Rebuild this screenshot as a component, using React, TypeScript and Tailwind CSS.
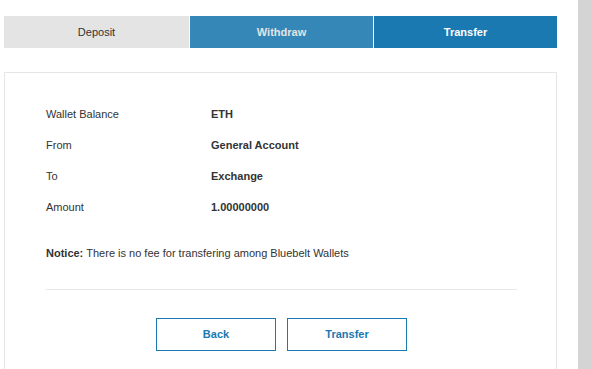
const rows = [
  { label: "Wallet Balance", value: "ETH" },
  { label: "From", value: "General Account" },
  { label: "To", value: "Exchange" },
  { label: "Amount", value: "1.00000000" },
]

export default function App() {
  return (
    <div
      className="flex h-[369px] w-[591px] overflow-hidden bg-white text-[11px] text-[#333]"
      style={{ fontFamily: '"Liberation Sans", Arial, sans-serif' }}
    >
      <div className="flex w-[578px] shrink-0 flex-col pl-[4px] pr-[21px] pt-[16px]">
        {/* tabs */}
        <div className="flex h-[32px] shrink-0 gap-px">
          <div className="flex w-[185px] items-center justify-center bg-[#e4e4e4] text-[#333]">Deposit</div>
          <div className="flex w-[183px] items-center justify-center bg-[#3587b8] font-bold text-[#e4e4e4]">Withdraw</div>
          <div className="flex flex-1 items-center justify-center bg-[#1a79b0] font-bold text-white">Transfer</div>
        </div>

        {/* card */}
        <div className="mt-[24px] shrink-0 border border-[#e6e6e6] pl-[41px] pr-[39px] pt-[26px] pb-[40px]">
          {rows.map((r) => (
            <div key={r.label} className="flex h-[31px] items-center">
              <div className="w-[165px]">{r.label}</div>
              <div className="font-bold">{r.value}</div>
            </div>
          ))}

          <div className="mt-[22px] flex h-[16px] items-center">
            <span className="font-bold">Notice:</span>
            <span className="ml-[3px]">There is no fee for transfering among Bluebelt Wallets</span>
          </div>

          <div className="mt-[28px] h-px bg-[#e8e8e8]" />

          <div className="mt-[28px] flex justify-center gap-[11px]">
            <button className="h-[33px] w-[120px] border border-[#1a79b0] bg-white font-bold text-[#1a79b0]">
              Back
            </button>
            <button className="h-[33px] w-[120px] border border-[#1a79b0] bg-white font-bold text-[#1a79b0]">
              Transfer
            </button>
          </div>
        </div>
      </div>
      <div className="h-full w-[13px] shrink-0 bg-[#d4d4d4]" />
    </div>
  )
}
